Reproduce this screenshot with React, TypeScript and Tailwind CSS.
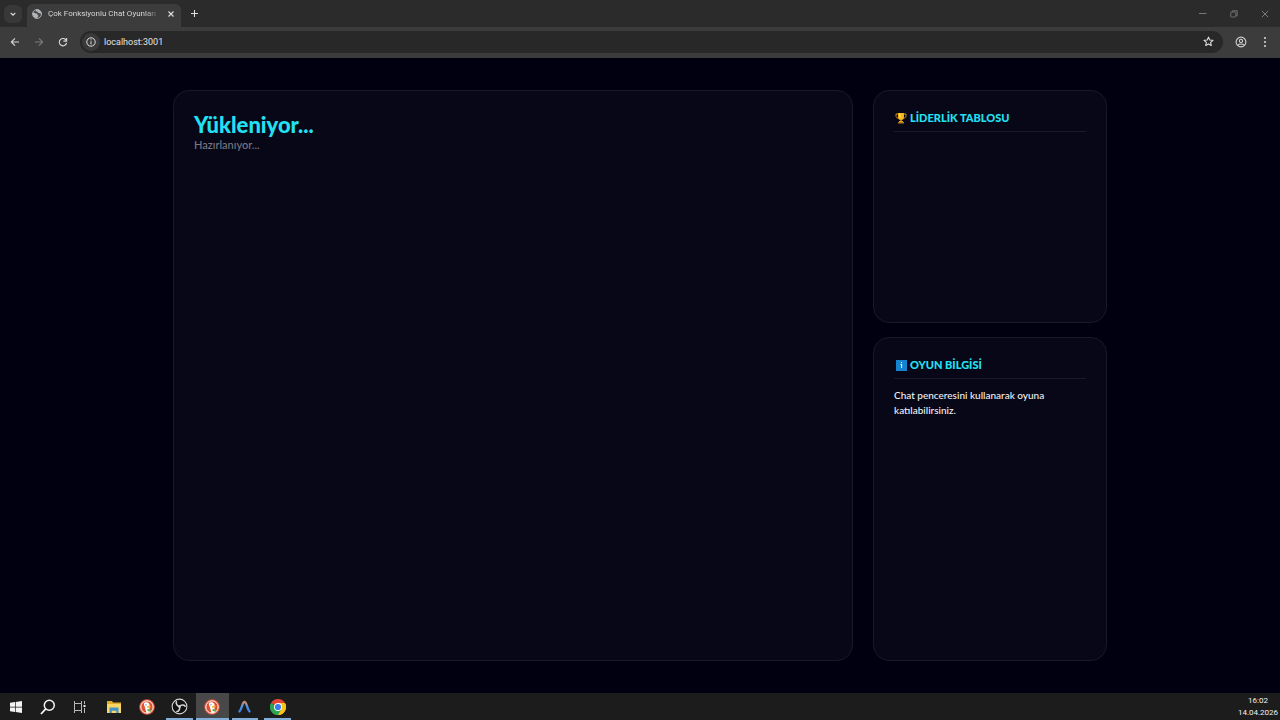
import type { ReactNode } from "react";

const uiFont = "font-[Roboto,'Open_Sans',sans-serif]";
const pageFont = "font-[Lato,'Open_Sans',sans-serif]";

function IconButton({ label, className = "", children }: { label: string; className?: string; children: ReactNode }) {
  return (
    <button type="button" aria-label={label} className={`flex shrink-0 items-center justify-center ${className}`}>
      {children}
    </button>
  );
}

function GlobeIcon() {
  return (
    <svg width="10" height="10" viewBox="0 0 20 20" className="shrink-0">
      <circle cx="10" cy="10" r="9" fill="#4a4b4c" stroke="#a9abad" strokeWidth="2" />
      <path d="M2 7c3-1 4 2 7 2s1 3 3 4-1 5-3 5C4 18 1 13 2 7z" fill="#b4b6b8" />
      <path d="M8 1c-1 3 0 4 2 4s1 3 4 3 3 2 5 2c0-6-5-10-11-9z" fill="#b4b6b8" />
    </svg>
  );
}

function TabStrip() {
  return (
    <div className="flex h-[27px] items-center bg-[#2b2b2b] pl-1">
      <IconButton label="Sekmelerde ara" className="size-[18px] rounded-md bg-[#383838]">
        <svg width="8" height="8" viewBox="0 0 8 8" fill="none" stroke="#e0e0e0" strokeWidth="1.2">
          <path d="M1.7 2.8 4 5.1l2.3-2.3" />
        </svg>
      </IconButton>
      <div className="ml-[5px] flex h-[23px] w-[154px] shrink-0 items-center self-end rounded-t-md bg-[#3c3c3c] pr-[2px] pb-[3px] pl-[5px]">
        <GlobeIcon />
        <button type="button" className="ml-[6px] bg-linear-to-r from-[#e3e3e3] from-90% to-[#777777] bg-clip-text text-left text-[8px] leading-3 whitespace-nowrap text-transparent">
          Çok Fonksiyonlu Chat Oyunları
        </button>
        <IconButton label="Sekmeyi kapat" className="ml-auto size-4">
          <svg width="8" height="8" viewBox="0 0 8 8" fill="none" stroke="#dedede" strokeWidth="1.1">
            <path d="m1.5 1.5 5 5m0-5-5 5" />
          </svg>
        </IconButton>
      </div>
      <IconButton label="Yeni sekme" className="ml-1 size-[18px]">
        <svg width="9" height="9" viewBox="0 0 9 9" fill="none" stroke="#dedede" strokeWidth="1.1">
          <path d="M4.5 1v7M1 4.5h7" />
        </svg>
      </IconButton>
      <div className="ml-auto flex">
        <IconButton label="Simge durumuna küçült" className="h-[27px] w-[31px]">
          <svg width="8" height="8" viewBox="0 0 8 8" stroke="#777" strokeWidth="1"><path d="M0 3.5h7.5" /></svg>
        </IconButton>
        <IconButton label="Geri yükle" className="h-[27px] w-[31px]">
          <svg width="8" height="8" viewBox="0 0 8 8" fill="none" stroke="#777" strokeWidth=".9">
            <rect x=".8" y="2" width="5" height="5" rx=".5" /><path d="M2.3 2V.8h4.900v4.900H6" />
          </svg>
        </IconButton>
        <IconButton label="Kapat" className="h-[27px] w-[31px]">
          <svg width="8" height="8" viewBox="0 0 8 8" stroke="#858585" strokeWidth=".9"><path d="m.8.8 6.400 6.400m0-6.400L.8 7.200" /></svg>
        </IconButton>
      </div>
    </div>
  );
}

function Toolbar() {
  return (
    <div className="flex h-[31px] items-center bg-[#3c3c3c] pb-[2px] pl-[3px]">
      <IconButton label="Geri" className="size-6">
        <svg width="10" height="10" viewBox="0 0 10 10" fill="none" stroke="#d8d8d8" strokeWidth="1.1"><path d="M9 5H1.5M5 1.300 1.300 5 5 8.700" /></svg>
      </IconButton>
      <IconButton label="İleri" className="size-6">
        <svg width="10" height="10" viewBox="0 0 10 10" fill="none" stroke="#7b7b7b" strokeWidth="1.1"><path d="M1 5h7.500M5 1.300 8.700 5 5 8.700" /></svg>
      </IconButton>
      <IconButton label="Yenile" className="size-6">
        <svg width="10" height="10" viewBox="0 0 10 10" fill="none" stroke="#d8d8d8" strokeWidth="1.1"><path d="M8.400 3.700A3.700 3.700 0 1 0 8.600 6" /><path d="M8.600.9v3.200H5.400" /></svg>
      </IconButton>
      <div className="ml-[5px] flex h-[22px] flex-1 items-center rounded-full bg-[#282828] pr-[9px] pl-[2px]">
        <IconButton label="Site bilgilerini görüntüle" className="size-[18px] rounded-full bg-[#3a3a3a]">
          <svg width="10" height="10" viewBox="0 0 10 10" fill="none" stroke="#e0e0e0" strokeWidth="1"><circle cx="5" cy="5" r="4.200" /><path d="M5 4.400v3M5 2.400v1" /></svg>
        </IconButton>
        <input aria-label="Adres çubuğu" readOnly value="localhost:3001" className="ml-1 min-w-0 flex-1 bg-transparent text-[9px] leading-4 text-[#e3e3e3] outline-none" />
        <IconButton label="Yer işareti ekle" className="size-3">
          <svg width="11" height="11" viewBox="0 0 11 11" fill="none" stroke="#dedede" strokeWidth="1.1" strokeLinejoin="round">
            <path d="m5.500 1.100 1.300 2.900 3.200.3-2.400 2.100.7 3.100-2.800-1.600-2.800 1.600.7-3.100L1 4.300l3.200-.3z" />
          </svg>
        </IconButton>
      </div>
      <IconButton label="Profil" className="ml-[6px] size-6">
        <svg width="12" height="12" viewBox="0 0 12 12" fill="none" stroke="#d2d2d2" strokeWidth="1.1">
          <circle cx="6" cy="6" r="4.900" /><circle cx="6" cy="4.900" r="1.600" /><path d="M2.800 9.200c1.700-1.700 4.700-1.700 6.400 0" />
        </svg>
      </IconButton>
      <IconButton label="Menü" className="mr-[3px] size-6">
        <svg width="4" height="12" viewBox="0 0 4 12" fill="#dedede"><circle cx="2" cy="2" r="1" /><circle cx="2" cy="6" r="1" /><circle cx="2" cy="10" r="1" /></svg>
      </IconButton>
    </div>
  );
}

function Panel({ className = "", children }: { className?: string; children?: ReactNode }) {
  return <section className={`rounded-2xl border border-[#191928] bg-[#080718] p-5 ${className}`}>{children}</section>;
}

function PanelTitle({ icon, children }: { icon: ReactNode; children: ReactNode }) {
  return (
    <h2 className="flex h-[21px] items-start gap-[3px] border-b border-[#191928] pl-[1px] text-[11px] leading-[14px] font-black text-[#22e1f5]">
      {icon}
      {children}
    </h2>
  );
}

function TrophyIcon() {
  return (
    <svg width="12" height="12" viewBox="0 0 24 24" className="mt-[1px] shrink-0">
      <path d="M6 4H2v3c0 4 2 5 6 6M18 4h4v3c0 4-2 5-6 6" fill="none" stroke="#d89214" strokeWidth="2" />
      <path d="M6 2h12v7c0 4-2 7-4.500 7h-3C8 16 6 13 6 9z" fill="#f5b51c" />
      <path d="M8 3h3v10C9 12 8 9 8 6z" fill="#ffe06a" />
      <path d="M10.500 15h3v4h-3z" fill="#d89214" />
      <path d="M6 20h12v3H6z" fill="#b67a1e" />
      <path d="M8 18h8v2H8z" fill="#e8a51c" />
    </svg>
  );
}

function InfoIcon() {
  return (
    <svg width="12" height="12" viewBox="0 0 12 12" className="mt-[1px] shrink-0">
      <path d="M1 1h11v11H1z" fill="#1583cf" />
      <path d="M6 3h1v1.200H6zM5.500 5h1.600v4H6V6h-.5z" fill="#d5efff" />
    </svg>
  );
}

function WindowsIcon() {
  return (
    <svg width="12" height="12" viewBox="0 0 12 12" fill="#f4f4f4">
      <path d="M0 1.800 5 1v4.700H0zM5.700.9 12 0v5.700H5.700zM0 6.400h5V11l-5-.8zM5.700 6.400H12V12l-6.300-.9z" />
    </svg>
  );
}

function SearchIcon() {
  return (
    <svg width="16" height="16" viewBox="0 0 16 16" fill="none" stroke="#f4f4f4" strokeWidth="1.500">
      <circle cx="9.300" cy="6.200" r="5" /><path d="M5.700 9.900 1 15" strokeWidth="1.800" />
    </svg>
  );
}

function TaskViewIcon() {
  return (
    <svg width="12" height="12" viewBox="0 0 12 12" fill="none" stroke="#b9b9b9">
      <path d="M.5 0v2.500h7V0M.5 12V9.500h7V12M.5 2.500v7M7.500 2.500v7M10.500 0v3M10.500 7v5" />
      <path d="M9.500 4h2v2h-2z" fill="#eee" stroke="none" />
    </svg>
  );
}

function FolderIcon() {
  return (
    <svg width="16" height="14" viewBox="0 0 16 14">
      <path d="M1 1h5l1 1.500h8V13H1z" fill="#e0ac2c" />
      <path d="M1 4h14v9H1z" fill="#fbd665" />
      <path d="M3.500 7.500h9V13h-2.300v-2.200H5.800V13H3.500z" fill="#4493c6" />
    </svg>
  );
}

function DuckIcon() {
  return (
    <svg width="16" height="16" viewBox="0 0 16 16">
      <circle cx="8" cy="8" r="7.800" fill="#dc5134" />
      <circle cx="8" cy="8" r="6.200" fill="#dc5134" stroke="#fff" strokeWidth="1" />
      <path d="M5 4.200C5.700 2.800 9.600 2.600 10.300 5c.5 1.500 0 2.500.2 4.400l.5 3.600A6 6 0 0 1 7.500 14L5.700 7.500C5 6 4.700 5.200 5 4.200z" fill="#fff" />
      <circle cx="7" cy="5.800" r=".6" fill="#31587c" />
      <path d="M8 7.200c1.500-.7 2.800-.6 4-.3-.7 1.500-2.500 1.800-4 1.800z" fill="#fdb52e" />
      <path d="m8.500 10 3.200.2v2.500L8.500 12z" fill="#5eb044" />
    </svg>
  );
}

function ObsIcon() {
  return (
    <svg width="17" height="17" viewBox="0 0 18 18" fill="none" stroke="#d6d6d6">
      <circle cx="9" cy="9" r="7.800" fill="#111" strokeWidth="1.100" />
      <g strokeWidth="1.700" strokeLinecap="round">
        <path d="M5.700 4C5 6 6.400 8.400 9 9" />
        <path d="M5.700 4C5 6 6.400 8.400 9 9" transform="rotate(120 9 9)" />
        <path d="M5.700 4C5 6 6.400 8.400 9 9" transform="rotate(240 9 9)" />
      </g>
      <circle cx="9" cy="9" r="1.300" fill="#d6d6d6" stroke="none" />
    </svg>
  );
}

function PeakIcon() {
  return (
    <svg width="13" height="13" viewBox="0 0 13 13" fill="none">
      <defs>
        <linearGradient id="peak" x1="0" y1="1" x2="0" y2="0">
          <stop offset="0" stopColor="#3f86f2" /><stop offset=".5" stopColor="#4a92dc" /><stop offset="1" stopColor="#d08a68" />
        </linearGradient>
      </defs>
      <path d="M1.500 11.500C4 9 4.300 2 6.500 2s2.500 7 5 9.500" stroke="url(#peak)" strokeWidth="2.300" strokeLinecap="round" />
    </svg>
  );
}

function ChromeIcon() {
  return (
    <svg width="16" height="16" viewBox="0 0 16 16">
      <path d="M8 8 1.070 4A8 8 0 0 1 14.930 4z" fill="#e64335" />
      <path d="M8 8 14.930 4A8 8 0 0 1 8 16z" fill="#fbc316" />
      <path d="M8 8v8A8 8 0 0 1 1.070 4z" fill="#2da44e" />
      <path d="M8 4h6.930A8 8 0 0 1 8 16l3.460-6z" fill="#fbc316" />
      <path d="M4.540 10 1.070 4A8 8 0 0 0 8 16l3.460-6z" fill="#2da44e" />
      <circle cx="8" cy="8" r="4" fill="#fff" /><circle cx="8" cy="8" r="3.100" fill="#3b7ded" />
    </svg>
  );
}

const apps = [
  { name: "Dosya Gezgini", icon: <FolderIcon />, state: "border-transparent" },
  { name: "DuckDuckGo", icon: <DuckIcon />, state: "border-transparent" },
  { name: "OBS Studio", icon: <ObsIcon />, state: "mx-[3px] border-[#82afd9]" },
  { name: "DuckDuckGo penceresi", icon: <DuckIcon />, state: "border-[#82afd9] bg-[#484848]" },
  { name: "Antigravity", icon: <PeakIcon />, state: "mx-[3px] border-[#82afd9]" },
  { name: "Google Chrome", icon: <ChromeIcon />, state: "mx-[3px] border-[#82afd9]" },
];

function Taskbar() {
  return (
    <footer className={`flex h-[27px] items-stretch bg-[#1c1c1c] ${uiFont}`}>
      <IconButton label="Başlat" className="w-8"><WindowsIcon /></IconButton>
      <IconButton label="Ara" className="w-8"><SearchIcon /></IconButton>
      <IconButton label="Görev görünümü" className="w-8"><TaskViewIcon /></IconButton>
      <nav aria-label="Uygulamalar" className="ml-[2px] grid w-[196px] grid-cols-6">
        {apps.map((app) => (
          <IconButton key={app.name} label={app.name} className={`border-b-2 pt-[2px] ${app.state}`}>{app.icon}</IconButton>
        ))}
      </nav>
      <button type="button" className="ml-auto flex w-11 flex-col items-center pt-[2px] text-[8px] leading-3 whitespace-nowrap text-[#f0f0f0]">
        <time>16:02</time>
        <time>14.04.2026</time>
      </button>
    </footer>
  );
}

export default function App() {
  return (
    <div lang="tr" className="flex min-h-screen flex-col bg-[#010010]">
      <header className={uiFont}>
        <TabStrip />
        <Toolbar />
      </header>
      <main className={`flex flex-1 justify-center px-5 py-8 ${pageFont}`}>
        <div className="grid w-full max-w-[934px] grid-cols-[1fr_234px] gap-5">
          <Panel>
            <h1 className="text-[22px] leading-7 font-black text-[#22e1f5]">Yükleniyor...</h1>
            <p className="text-[11px] leading-3 font-medium text-[#777681]">Hazırlanıyor...</p>
          </Panel>
          <aside className="flex flex-col gap-[14px]">
            <Panel className="h-[233px]">
              <PanelTitle icon={<TrophyIcon />}>LİDERLİK TABLOSU</PanelTitle>
            </Panel>
            <Panel className="flex-1">
              <PanelTitle icon={<InfoIcon />}>OYUN BİLGİSİ</PanelTitle>
              <p className="mt-[9px] text-[10px] leading-[15px] font-medium text-[#f1f1f4]">
                Chat penceresini kullanarak oyuna katılabilirsiniz.
              </p>
            </Panel>
          </aside>
        </div>
      </main>
      <Taskbar />
    </div>
  );
}
